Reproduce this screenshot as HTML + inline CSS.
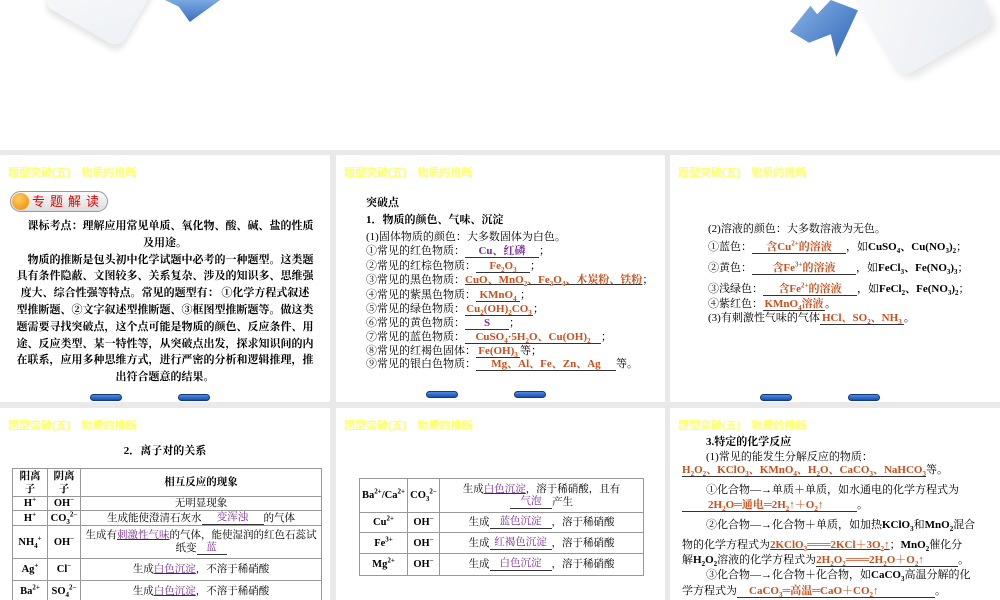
<!DOCTYPE html>
<html><head><meta charset="utf-8"><style>
*{margin:0;padding:0;box-sizing:border-box}
body{width:1000px;height:600px;overflow:hidden;background:#e9e9e9;position:relative;font-family:"Liberation Serif","Noto Serif CJK SC","Noto Sans CJK SC",serif;color:#000}
.top{position:absolute;left:0;top:0;width:1000px;height:150px;background:#fff;overflow:hidden}
.p{position:absolute;background:#fff;overflow:hidden}
.h{position:absolute;left:8px;top:9px;font:bold 11px "Liberation Sans","Noto Sans CJK SC",sans-serif;color:#ffff70}
.a{position:absolute;white-space:nowrap;font-size:11px;line-height:14px}
.b{font-weight:bold}
.o{color:#c8501e;text-decoration:underline;text-decoration-color:#333}
.pu{color:#7a2a9a;text-decoration:underline;text-decoration-color:#333}
.u{display:inline-block;border-bottom:1px solid #333;text-align:center;line-height:12px;height:13px;vertical-align:bottom}
.nav{position:absolute;width:32px;height:7px;border-radius:4px;background:linear-gradient(#4a8be0,#1a4fb0);border:1px solid #123a80}
table{position:absolute;border-collapse:collapse;font-size:10.5px;font-weight:bold}
td{border:1px solid #999;text-align:center;padding:0 2px;line-height:13px}
sup,sub{font-size:7px;line-height:0}
</style></head><body>
<div class="top">
 <div style="position:absolute;left:58px;top:-58px;width:90px;height:90px;background:linear-gradient(135deg,#fbfcfd,#eef1f5);border-radius:12px;transform:rotate(30deg);box-shadow:3px 5px 6px #e6e6e6"></div>
 <div style="position:absolute;left:165px;top:0;width:55px;height:22px;background:linear-gradient(#7aa8e0,#3a6fc0);clip-path:polygon(0 0,100% 0,45% 100%,25% 30%)"></div>
 <div style="position:absolute;left:790px;top:0;width:68px;height:57px;background:linear-gradient(135deg,#8ab4e8,#2f66b8);clip-path:polygon(0 55%,30% 10%,40% 25%,60% 0,100% 18%,68% 100%,60% 60%,28% 75%)"></div>
 <div style="position:absolute;left:868px;top:-42px;width:110px;height:100px;background:linear-gradient(135deg,#f8f9fb,#e8ecf1);border-radius:14px;transform:rotate(-30deg);box-shadow:2px 6px 8px #e6e6e6"></div>
</div>

<!-- panel 1 -->
<div class="p" style="left:0;top:155px;width:330px;height:247px">
 <div class="h">题型突破(五)　物质的推断</div>
 <div style="position:absolute;left:10px;top:36px;width:98px;height:21px;border-radius:11px;background:linear-gradient(#fafafa,#ddd);border:1px solid #999"></div>
 <div style="position:absolute;left:12px;top:38px;width:17px;height:17px;border-radius:50%;background:radial-gradient(circle at 40% 35%,#ffd060,#f08000)"></div>
 <div class="a" style="left:32px;top:39px;color:#e00000;font-size:13px;letter-spacing:5px;font-family:'Noto Sans CJK SC',sans-serif">专题解读</div>
 <div class="b" style="position:absolute;left:0;top:63px;width:330px;font-size:11px;line-height:16.8px;text-align:center;white-space:nowrap">
 　课标考点：理解应用常见单质、氧化物、酸、碱、盐的性质<br>及用途。<br>　物质的推断是包头初中化学试题中必考的一种题型。这类题<br>具有条件隐蔽、文图较多、关系复杂、涉及的知识多、思维强<br>度大、综合性强等特点。常见的题型有： ①化学方程式叙述<br>型推断题、②文字叙述型推断题、③框图型推断题等。做这类<br>题需要寻找突破点，这个点可能是物质的颜色、反应条件、用<br>途、反应类型、某一特性等，从突破点出发，探求知识间的内<br>在联系，应用多种思维方式，进行严密的分析和逻辑推理，推<br>出符合题意的结果。</div>
 <div class="nav" style="left:90px;top:239px"></div><div class="nav" style="left:178px;top:239px"></div>
</div>

<!-- panel 2 -->
<div class="p" style="left:336px;top:155px;width:329px;height:247px">
 <div class="h">题型突破(五)　物质的推断</div>
 <div class="a b" style="left:30px;top:41px">突破点</div>
 <div class="a b" style="left:30px;top:58px">1．物质的颜色、气味、沉淀</div>
 <div class="a" style="left:30px;top:75px">(1)固体物质的颜色：大多数固体为白色。</div>
 <div class="a" style="left:30px;top:89px">①常见的红色物质：<span class="u b" style="width:74px;color:#7a2a9a">Cu、红磷</span>；</div>
 <div class="a" style="left:30px;top:104px">②常见的红棕色物质：<span class="u b" style="width:54px;color:#c8501e">Fe<sub>2</sub>O<sub>3</sub></span>；</div>
 <div class="a" style="left:30px;top:118px">③常见的黑色物质：<span class="o b">CuO、MnO<sub>2</sub>、Fe<sub>3</sub>O<sub>4</sub>、木炭粉、铁粉</span>；</div>
 <div class="a" style="left:30px;top:133px">④常见的紫黑色物质：<span class="u b" style="width:44px;color:#c8501e">KMnO<sub>4</sub></span>；</div>
 <div class="a" style="left:30px;top:147px">⑤常见的绿色物质：<span class="u b" style="width:68px;color:#c8501e">Cu<sub>2</sub>(OH)<sub>2</sub>CO<sub>3</sub></span>；</div>
 <div class="a" style="left:30px;top:161px">⑥常见的黄色物质：<span class="u b" style="width:44px;color:#7a2a9a">S</span>；</div>
 <div class="a" style="left:30px;top:175px">⑦常见的蓝色物质：<span class="u b" style="width:136px;color:#c8501e">CuSO<sub>4</sub>·5H<sub>2</sub>O、Cu(OH)<sub>2</sub></span>；</div>
 <div class="a" style="left:30px;top:189px">⑧常见的红褐色固体：<span class="u b" style="width:44px;color:#c8501e">Fe(OH)<sub>3</sub></span>等；</div>
 <div class="a" style="left:30px;top:202px">⑨常见的银白色物质：<span class="u b" style="width:140px;color:#c8501e">Mg、Al、Fe、Zn、Ag</span>等。</div>
 <div class="nav" style="left:90px;top:236px"></div><div class="nav" style="left:178px;top:236px"></div>
</div>

<!-- panel 3 -->
<div class="p" style="left:670px;top:155px;width:330px;height:247px">
 <div class="h">题型突破(五)　物质的推断</div>
 <div class="a" style="left:38px;top:67px">(2)溶液的颜色：大多数溶液为无色。</div>
 <div class="a" style="left:38px;top:85px">①蓝色：<span class="u b" style="width:94px;color:#c8501e">含Cu<sup>2+</sup>的溶液</span>，如<b>CuSO<sub>4</sub>、Cu(NO<sub>3</sub>)<sub>2</sub></b>；</div>
 <div class="a" style="left:38px;top:106px">②黄色：<span class="u b" style="width:104px;color:#c8501e">含Fe<sup>3+</sup>的溶液</span>，如<b>FeCl<sub>3</sub>、Fe(NO<sub>3</sub>)<sub>3</sub></b>；</div>
 <div class="a" style="left:38px;top:127px">③浅绿色：<span class="u b" style="width:94px;color:#c8501e">含Fe<sup>2+</sup>的溶液</span>，如<b>FeCl<sub>2</sub>、Fe(NO<sub>3</sub>)<sub>2</sub></b>；</div>
 <div class="a" style="left:38px;top:142px">④紫红色：<span class="u b" style="width:62px;color:#c8501e">KMnO<sub>4</sub>溶液</span>。</div>
 <div class="a" style="left:38px;top:156px">(3)有刺激性气味的气体<span class="u b" style="width:84px;color:#c8501e">HCl、SO<sub>2</sub>、NH<sub>3</sub></span>。</div>
 <div class="nav" style="left:90px;top:239px"></div><div class="nav" style="left:178px;top:239px"></div>
</div>

<!-- panel 4 -->
<div class="p" style="left:0;top:408px;width:330px;height:192px">
 <div class="h">题型突破(五)　物质的推断</div>
 <div class="a b" style="left:0;width:330px;text-align:center;top:36px">2．离子对的关系</div>
 <table style="left:12px;top:60px;width:310px">
  <tr style="height:28px"><td style="width:35px">阳离子</td><td style="width:33px">阴离子</td><td>相互反应的现象</td></tr>
  <tr style="height:14px"><td>H<sup>+</sup></td><td>OH<sup>−</sup></td><td style="font-weight:normal">无明显现象</td></tr>
  <tr style="height:15px"><td>H<sup>+</sup></td><td>CO<sub>3</sub><sup>2−</sup></td><td style="font-weight:normal">生成能使澄清石灰水<span class="u" style="width:62px;color:#7a2a9a">变浑浊</span>的气体</td></tr>
  <tr style="height:33px"><td>NH<sub>4</sub><sup>+</sup></td><td>OH<sup>−</sup></td><td style="font-weight:normal">生成有<span class="pu">刺激性气味</span>的气体，能使湿润的红色石蕊试纸变<span class="u" style="width:30px;color:#7a2a9a">蓝</span></td></tr>
  <tr style="height:22px"><td>Ag<sup>+</sup></td><td>Cl<sup>−</sup></td><td style="font-weight:normal">生成<span class="pu">白色沉淀</span>，不溶于稀硝酸</td></tr>
  <tr style="height:22px"><td>Ba<sup>2+</sup></td><td>SO<sub>4</sub><sup>2−</sup></td><td style="font-weight:normal">生成<span class="pu">白色沉淀</span>，不溶于稀硝酸</td></tr>
 </table>
</div>

<!-- panel 5 -->
<div class="p" style="left:336px;top:408px;width:329px;height:192px">
 <div class="h">题型突破(五)　物质的推断</div>
 <table style="left:23px;top:70px;width:285px">
  <tr style="height:34px"><td style="width:47px">Ba<sup>2+</sup>/Ca<sup>2+</sup></td><td style="width:32px">CO<sub>3</sub><sup>2−</sup></td><td style="font-weight:normal">生成<span class="pu">白色沉淀</span>，溶于稀硝酸，且有<span class="u" style="width:42px;color:#7a2a9a">气泡</span>产生</td></tr>
  <tr style="height:20px"><td>Cu<sup>2+</sup></td><td>OH<sup>−</sup></td><td style="font-weight:normal">生成<span class="u" style="width:62px;color:#7a2a9a">蓝色沉淀</span>，溶于稀硝酸</td></tr>
  <tr style="height:21px"><td>Fe<sup>3+</sup></td><td>OH<sup>−</sup></td><td style="font-weight:normal">生成<span class="u" style="width:62px;color:#7a2a9a">红褐色沉淀</span>，溶于稀硝酸</td></tr>
  <tr style="height:22px"><td>Mg<sup>2+</sup></td><td>OH<sup>−</sup></td><td style="font-weight:normal">生成<span class="u" style="width:62px;color:#7a2a9a">白色沉淀</span>，溶于稀硝酸</td></tr>
 </table>
</div>

<!-- panel 6 -->
<div class="p" style="left:670px;top:408px;width:330px;height:192px">
 <div class="h">题型突破(五)　物质的推断</div>
 <div class="a b" style="left:36px;top:27px">3.特定的化学反应</div>
 <div class="a" style="left:36px;top:42px">(1)常见的能发生分解反应的物质：</div>
 <div class="a" style="left:12px;top:55px"><span class="u b" style="width:244px;color:#c8501e">H<sub>2</sub>O<sub>2</sub>、KClO<sub>3</sub>、KMnO<sub>4</sub>、H<sub>2</sub>O、CaCO<sub>3</sub>、NaHCO<sub>3</sub></span>等。</div>
 <div class="a" style="left:36px;top:75px">①化合物—→单质＋单质，如水通电的化学方程式为</div>
 <div class="a" style="left:12px;top:90px"><span class="u b" style="width:175px;color:#c8501e;text-align:left;padding-left:26px">2H<sub>2</sub>O═通电═2H<sub>2</sub>↑＋O<sub>2</sub>↑</span>。</div>
 <div class="a" style="left:36px;top:110px">②化合物—→化合物＋单质，如加热<b>KClO<sub>3</sub></b>和<b>MnO<sub>2</sub></b>混合</div>
 <div class="a" style="left:12px;top:130px">物的化学方程式为<span class="o b">2KClO<sub>3</sub>═══2KCl＋3O<sub>2</sub>↑</span>；<b>MnO<sub>2</sub></b>催化分</div>
 <div class="a" style="left:12px;top:145px">解<b>H<sub>2</sub>O<sub>2</sub></b>溶液的化学方程式为<span class="u b" style="width:142px;color:#c8501e;text-align:left">2H<sub>2</sub>O<sub>2</sub>═══2H<sub>2</sub>O＋O<sub>2</sub>↑</span>。</div>
 <div class="a" style="left:36px;top:160px">③化合物—→化合物＋化合物，如<b>CaCO<sub>3</sub></b>高温分解的化</div>
 <div class="a" style="left:12px;top:176px">学方程式为<span class="u b" style="width:198px;color:#c8501e;text-align:left;padding-left:12px">CaCO<sub>3</sub>═高温═CaO＋CO<sub>2</sub>↑</span>。</div>
</div>
</body></html>
